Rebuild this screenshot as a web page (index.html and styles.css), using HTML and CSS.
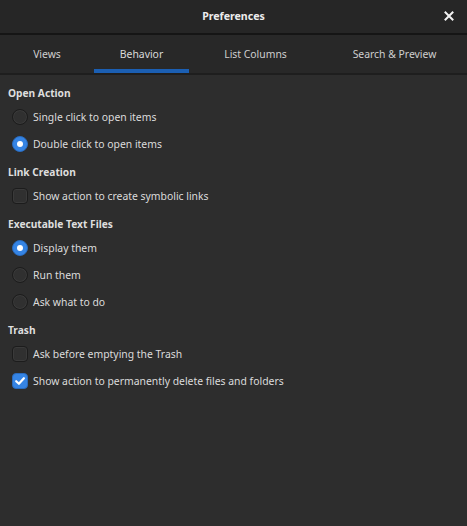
FILE: index.html
```html
<!DOCTYPE html>
<html>
<head>
<meta charset="utf-8">
<link rel="stylesheet" href="styles.css">
</head>
<body>
<div class="window">
  <header class="titlebar">
    <span class="title">Preferences</span>
    <button class="close" aria-label="Close">
      <svg width="10" height="10" viewBox="0 0 10 10"><path d="M1.5 1.5 L8.5 8.5 M8.5 1.5 L1.5 8.5" stroke="#f2f2f2" stroke-width="2" stroke-linecap="square"/></svg>
    </button>
  </header>
  <nav class="tabs">
    <div class="tab">Views</div>
    <div class="tab active">Behavior</div>
    <div class="tab">List Columns</div>
    <div class="tab">Search &amp; Preview</div>
  </nav>
  <main class="content">
    <section class="group">
      <h2 class="heading">Open Action</h2>
      <label class="row"><span class="radio"></span>Single click to open items</label>
      <label class="row"><span class="radio on"></span>Double click to open items</label>
    </section>
    <section class="group">
      <h2 class="heading">Link Creation</h2>
      <label class="row"><span class="check"></span>Show action to create symbolic links</label>
    </section>
    <section class="group">
      <h2 class="heading">Executable Text Files</h2>
      <label class="row"><span class="radio on"></span>Display them</label>
      <label class="row"><span class="radio"></span>Run them</label>
      <label class="row"><span class="radio"></span>Ask what to do</label>
    </section>
    <section class="group">
      <h2 class="heading">Trash</h2>
      <label class="row"><span class="check"></span>Ask before emptying the Trash</label>
      <label class="row"><span class="check on"><svg width="12" height="12" viewBox="0 0 12 12"><path d="M2.2 6.2 L4.9 8.8 L9.9 3.2" fill="none" stroke="#fff" stroke-width="2.2" stroke-linecap="round" stroke-linejoin="round"/></svg></span>Show action to permanently delete files and folders</label>
    </section>
  </main>
</div>
</body>
</html>
```

FILE: styles.css
```css
* { box-sizing: border-box; }
html, body {
  margin: 0;
  padding: 0;
  background: #2d2d2d;
  height: 100%;
}
body {
  font-family: "Noto Sans", "Open Sans", sans-serif;
  font-size: 10.4px;
  color: #dcdcdc;
}
.window {
  width: 467px;
  height: 526px;
  display: flex;
  flex-direction: column;
  background: #2d2d2d;
}
.titlebar {
  height: 35px;
  background: #262626;
  border-bottom: 2px solid #151515;
  display: flex;
  align-items: center;
  justify-content: center;
  position: relative;
}
.title {
  font-weight: bold;
  font-size: 10.6px;
  color: #ececec;
  margin-top: -2px;
}
.close {
  position: absolute;
  right: 12px;
  top: 10px;
  background: none;
  border: 0;
  padding: 0;
  width: 12px;
  height: 12px;
  display: flex;
  align-items: center;
  justify-content: center;
}
.tabs {
  height: 40px;
  background: #282828;
  border-bottom: 2px solid #1e1e1e;
  display: grid;
  grid-template-columns: 94px 95px 133px 1fr;
}
.tab {
  display: flex;
  align-items: center;
  justify-content: center;
  color: #cfcfcf;
  font-size: 10.4px;
  padding-bottom: 1px;
  border-bottom: 4px solid transparent;
  padding-top: 4px;
}
.tab.active {
  border-bottom-color: #1b5fb3;
  color: #dadada;
}
.content {
  padding: 10px 8px 0 8px;
  display: flex;
  flex-direction: column;
}
.group {
  display: flex;
  flex-direction: column;
  margin-bottom: 7px;
}
.heading {
  margin: 0 0 2px 0;
  font-size: 10.2px;
  font-weight: bold;
  color: #dedede;
  height: 16px;
  line-height: 16px;
}
.row {
  display: flex;
  align-items: center;
  height: 27px;
  padding-left: 4px;
  gap: 5px;
}
.radio {
  width: 16px;
  height: 16px;
  border-radius: 50%;
  background: #303030;
  border: 1px solid #1c1c1c;
  box-shadow: inset 0 0 0 1px #3a3a3a;
  flex: none;
  display: flex;
  align-items: center;
  justify-content: center;
}
.radio.on {
  background: #3584e4;
  border-color: #2a6bbd;
  box-shadow: none;
}
.radio.on::after {
  content: "";
  width: 6px;
  height: 6px;
  border-radius: 50%;
  background: #ffffff;
}
.check {
  width: 16px;
  height: 16px;
  border-radius: 4px;
  background: #303030;
  border: 1px solid #1c1c1c;
  box-shadow: inset 0 0 0 1px #3a3a3a;
  flex: none;
  display: flex;
  align-items: center;
  justify-content: center;
}
.check.on {
  background: #3584e4;
  border-color: #2a6bbd;
  box-shadow: none;
}
```
